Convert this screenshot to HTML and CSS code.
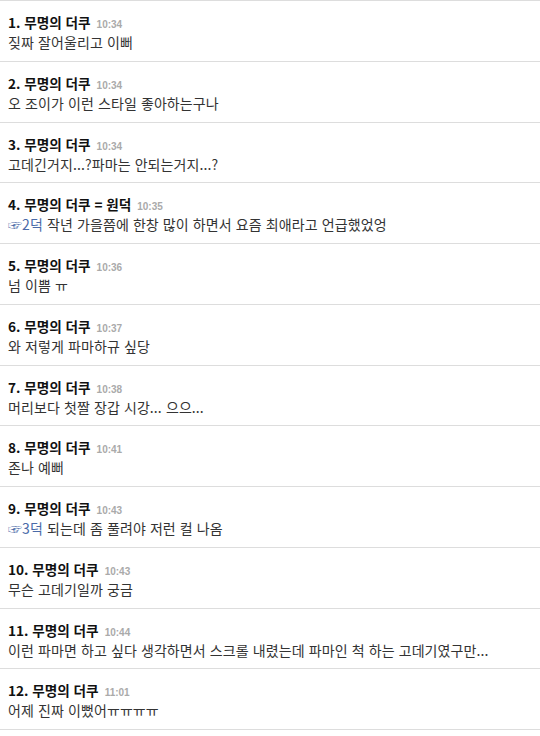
FILE: index.html
```html
<!DOCTYPE html>
<html lang="ko">
<head>
<meta charset="utf-8">
<link rel="stylesheet" href="styles.css">
</head>
<body>
<ul class="list">
  <li class="item"><div class="head"><span class="name">1. 무명의 더쿠</span><span class="time">10:34</span></div><div class="body">짖짜 잘어울리고 이뻐</div></li>
  <li class="item"><div class="head"><span class="name">2. 무명의 더쿠</span><span class="time">10:34</span></div><div class="body">오 조이가 이런 스타일 좋아하는구나</div></li>
  <li class="item"><div class="head"><span class="name">3. 무명의 더쿠</span><span class="time">10:34</span></div><div class="body">고데긴거지...?파마는 안되는거지...?</div></li>
  <li class="item"><div class="head"><span class="name">4. 무명의 더쿠 = 원덕</span><span class="time">10:35</span></div><div class="body"><span class="ref">☞2덕</span> 작년 가을쯤에 한창 많이 하면서 요즘 최애라고 언급했었엉</div></li>
  <li class="item"><div class="head"><span class="name">5. 무명의 더쿠</span><span class="time">10:36</span></div><div class="body">넘 이쁨 ㅠ</div></li>
  <li class="item"><div class="head"><span class="name">6. 무명의 더쿠</span><span class="time">10:37</span></div><div class="body">와 저렇게 파마하규 싶당</div></li>
  <li class="item"><div class="head"><span class="name">7. 무명의 더쿠</span><span class="time">10:38</span></div><div class="body">머리보다 첫짤 장갑 시강... 으으...</div></li>
  <li class="item"><div class="head"><span class="name">8. 무명의 더쿠</span><span class="time">10:41</span></div><div class="body">존나 예뻐</div></li>
  <li class="item"><div class="head"><span class="name">9. 무명의 더쿠</span><span class="time">10:43</span></div><div class="body"><span class="ref">☞3덕</span> 되는데 좀 풀려야 저런 컬 나옴</div></li>
  <li class="item"><div class="head"><span class="name">10. 무명의 더쿠</span><span class="time">10:43</span></div><div class="body">무슨 고데기일까 궁금</div></li>
  <li class="item"><div class="head"><span class="name">11. 무명의 더쿠</span><span class="time">10:44</span></div><div class="body">이런 파마면 하고 싶다 생각하면서 스크롤 내렸는데 파마인 척 하는 고데기였구만...</div></li>
  <li class="item"><div class="head"><span class="name">12. 무명의 더쿠</span><span class="time">11:01</span></div><div class="body">어제 진짜 이뻤어ㅠㅠㅠㅠ</div></li>
</ul>
</body>
</html>
```
FILE: styles.css
```css
html, body {
  margin: 0;
  padding: 0;
  background: #fff;
}
body {
  font-family: "Noto Sans CJK KR", "Noto Sans", sans-serif;
  color: #333;
}
.list {
  list-style: none;
  margin: 0;
  padding: 0;
  border-top: 1px solid #ddd;
}
.item {
  border-bottom: 1px solid #ddd;
  padding: 11px 8px 0 8px;
  height: 48.75px;
}
.head {
  display: flex;
  align-items: baseline;
  gap: 6px;
  height: 20px;
  line-height: 20px;
}
.name {
  font-size: 13.6px;
  font-weight: bold;
  color: #111;
}
.time {
  font-family: "Liberation Sans", Arial, sans-serif;
  font-size: 10px;
  font-weight: bold;
  color: #aaa;
}
.body {
  font-size: 14px;
  line-height: 20px;
  letter-spacing: 0.1px;
  color: #333;
}
.ref {
  color: #4a6aa8;
}
```
